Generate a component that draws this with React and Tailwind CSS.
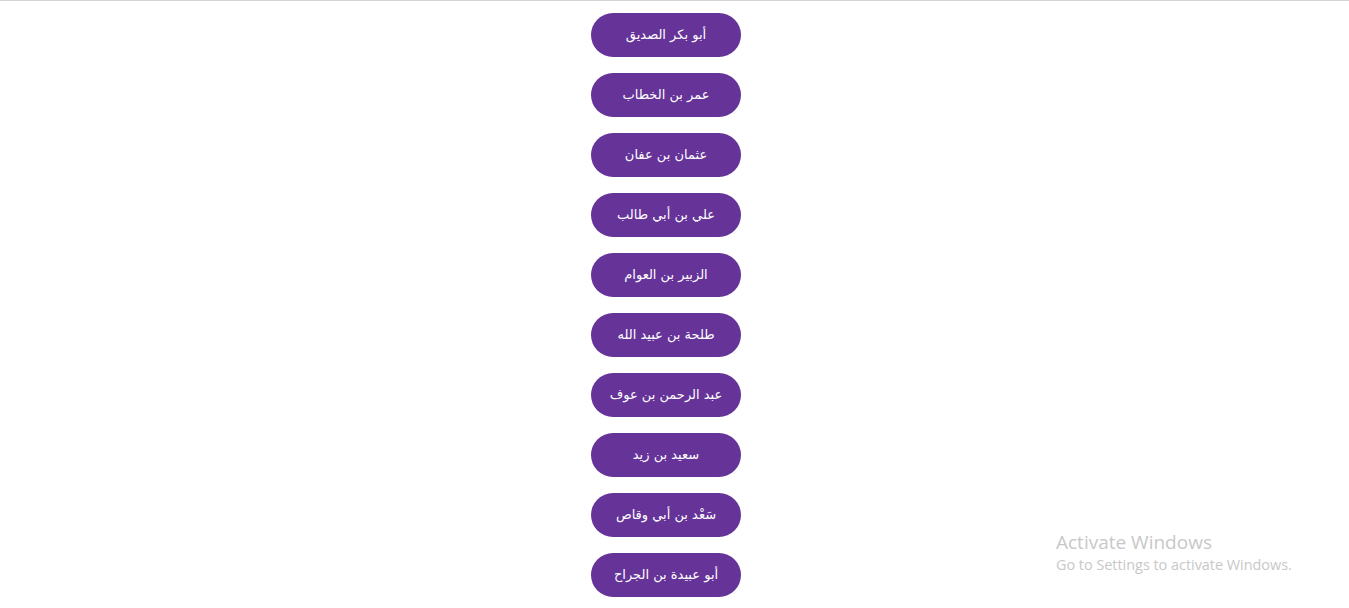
import React from "react";

const names = [
  "أبو بكر الصديق",
  "عمر بن الخطاب",
  "عثمان بن عفان",
  "علي بن أبي طالب",
  "الزبير بن العوام",
  "طلحة بن عبيد الله",
  "عبد الرحمن بن عوف",
  "سعيد بن زيد",
  "سَعْد بن أبي وقاص",
  "أبو عبيدة بن الجراح",
];

export default function App() {
  return (
    <div className="min-h-[608px] bg-white border-t border-[#d3d3d3] relative">
      <div className="w-[1332px] flex flex-col items-center gap-4 pt-3">
        {names.map((n) => (
          <button
            key={n}
            dir="rtl"
            className="w-[150px] h-[44px] rounded-[22px] bg-[#663399] text-white text-[13px] flex items-center justify-center"
            style={{ fontFamily: '"DejaVu Sans", "Liberation Sans", sans-serif' }}
          >
            {n}
          </button>
        ))}
      </div>
      <div
        className="absolute left-[1056px] top-[532px] text-[#c8c8c8] leading-none"
        style={{ fontFamily: '"Open Sans", "Noto Sans", sans-serif' }}
      >
        <div className="text-[19px]">Activate Windows</div>
        <div className="text-[14.4px] mt-[6px]">Go to Settings to activate Windows.</div>
      </div>
    </div>
  );
}
